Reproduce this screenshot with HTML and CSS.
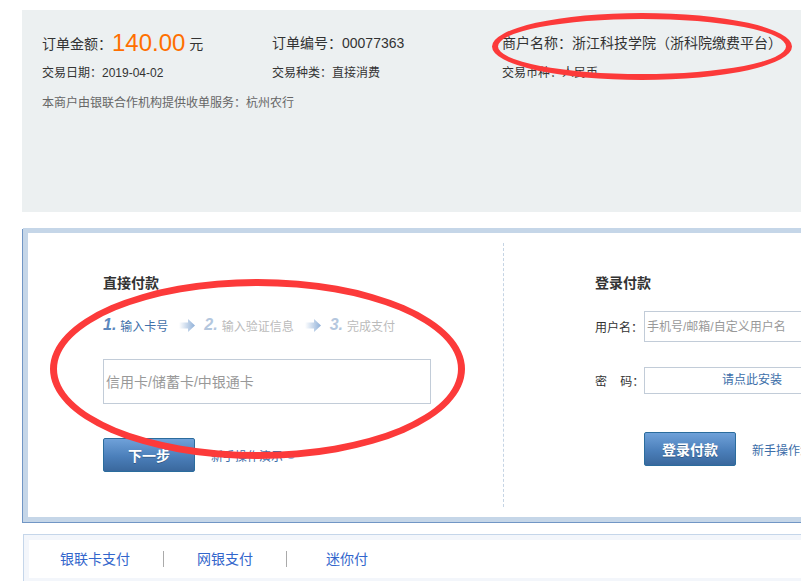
FILE: index.html
```html
<!DOCTYPE html>
<html>
<head>
  <meta charset="UTF-8">
  <title>银联在线支付</title>
  <link rel="stylesheet" href="styles.css">
</head>
<body>
  <div class="page">
    <!-- Order summary -->
    <div class="order">
      <div class="order-row big">
        <div>订单金额：<span class="amount">140.00</span> 元</div>
        <div>订单编号：00077363</div>
        <div>商户名称：浙江科技学院（浙科院缴费平台）</div>
      </div>
      <div class="order-row">
        <div>交易日期：2019-04-02</div>
        <div>交易种类：直接消费</div>
        <div>交易币种：人民币</div>
      </div>
      <div class="order-note">本商户由银联合作机构提供收单服务：杭州农行</div>
    </div>

    <!-- Payment panel -->
    <div class="pay">
      <div class="direct">
        <h3>直接付款</h3>
        <div class="steps">
          <span class="num on">1.</span><span class="step on">输入卡号</span>
          <svg class="arrow" width="16" height="13" viewBox="0 0 16 13">
            <defs>
              <linearGradient id="ag" x1="0" x2="1" y1="0" y2="0">
                <stop offset="0" stop-color="#ffffff"/>
                <stop offset="1" stop-color="#8fb0d8"/>
              </linearGradient>
            </defs>
            <path d="M0 3.5H9V0L16 6.5L9 13V9.5H0Z" fill="url(#ag)"/>
          </svg>
          <span class="num">2.</span><span class="step">输入验证信息</span>
          <svg class="arrow" width="16" height="13" viewBox="0 0 16 13">
            <path d="M0 3.5H9V0L16 6.5L9 13V9.5H0Z" fill="url(#ag)"/>
          </svg>
          <span class="num">3.</span><span class="step">完成支付</span>
        </div>
        <input class="card-input" type="text" placeholder="信用卡/储蓄卡/中银通卡">
        <div class="actions">
          <button class="btn">下一步</button>
          <a class="help" href="#">新手操作演示</a><span class="help-dot"></span>
        </div>
      </div>

      <div class="login">
        <h3>登录付款</h3>
        <div class="field user">
          <label>用户名：</label>
          <input type="text" placeholder="手机号/邮箱/自定义用户名">
        </div>
        <div class="field pass">
          <label>密&nbsp;&nbsp;&nbsp;&nbsp;码：</label>
          <div class="fake-input"><a href="#">请点此安装</a></div>
        </div>
        <div class="actions login-actions">
          <button class="btn">登录付款</button>
          <a class="help" href="#">新手操作演示</a>
        </div>
      </div>
    </div>

    <!-- Other payment methods -->
    <div class="tabs">
      <div class="tabs-inner">
        <a href="#" class="tab first">银联卡支付</a>
        <span class="sep"></span>
        <a href="#" class="tab">网银支付</a>
        <span class="sep"></span>
        <a href="#" class="tab last">迷你付</a>
      </div>
    </div>

    <!-- red hand-drawn marks -->
    <div class="mark mark-merchant"></div>
    <div class="mark mark-card"></div>
  </div>
</body>
</html>
```

FILE: styles.css
```css
/* Base */
* {
  box-sizing: border-box;
}

html, body {
  margin: 0;
  padding: 0;
  overflow: hidden;
  background: #fff;
}

body {
  font-family: "Liberation Sans", "Noto Sans CJK SC", sans-serif;
  font-size: 12px;
  color: #333;
}

a {
  text-decoration: none;
}

.page {
  position: relative;
  width: 1000px;
  padding: 10px 0 0 22px;
}

/* Order summary */
.order {
  height: 202px;
  background: #ecf0f1;
  padding: 18px 0 0 20px;
}

.order-row {
  display: grid;
  grid-template-columns: 230px 230px auto;
  height: 30px;
  align-items: center;
  line-height: 20px;
}

.order-row.big {
  font-size: 14px;
}

.amount {
  font-size: 24px;
  color: #ff6f00;
  vertical-align: -2px;
}

.order-note {
  height: 30px;
  line-height: 30px;
  color: #666;
}

/* Payment panel */
.pay {
  display: flex;
  margin: 16px 0 0 1px;
  border: 5px solid #c5d6e8;
  box-shadow: -1px 1px 0 #7196c5;
  background: #fff;
  height: 294px;
  padding: 10px 0;
}

.pay h3 {
  margin: 0;
  font-size: 14px;
  line-height: 20px;
  font-weight: bold;
  color: #333;
}

.direct {
  width: 476px;
  padding: 30px 0 0 75px;
  border-right: 1px dashed #c5d4e4;
}

.steps {
  display: flex;
  align-items: center;
  height: 20px;
  margin-top: 22px;
  color: #bbb;
}

.steps .num {
  font-size: 16px;
  font-weight: bold;
  font-style: italic;
  color: #b4c7de;
  margin-right: 4px;
}

.steps .num.on {
  color: #5c87bd;
}

.steps .step.on {
  color: #3f6fa9;
}

.steps .arrow {
  margin: 0 9px 0 11px;
}

.card-input {
  display: block;
  width: 328px;
  height: 45px;
  margin-top: 24px;
  border: 1px solid #c2ccd8;
  padding: 0 2px;
  font-family: inherit;
  font-size: 14px;
  color: #333;
  outline: none;
}

.card-input::placeholder {
  color: #999;
}

.actions {
  display: flex;
  align-items: center;
  margin-top: 34px;
}

.btn {
  width: 92px;
  height: 34px;
  border: 1px solid #2b6c9d;
  border-radius: 2px;
  background: linear-gradient(#6fa1d9, #4b7fba 55%, #3a689d);
  color: #fff;
  font-family: inherit;
  font-size: 14px;
  font-weight: bold;
  text-shadow: 0 1px 0 rgba(0,0,0,0.25);
  padding: 0;
  cursor: pointer;
}

.help {
  margin-left: 16px;
  color: #3c6ea9;
  font-size: 12px;
}

.help-dot {
  width: 8px;
  height: 8px;
  margin-left: 4px;
  border-radius: 50%;
  background: #8fb2d8;
}

/* Login side */
.login {
  padding: 30px 0 0 91px;
}

.field {
  display: flex;
  align-items: center;
}

.field label {
  width: 49px;
  color: #333;
}

.field.user {
  margin-top: 18px;
}

.field.user input {
  width: 200px;
  height: 31px;
  border: 1px solid #c2ccd8;
  padding: 0 2px;
  font-family: inherit;
  font-size: 12px;
  outline: none;
}

.field.user input::placeholder {
  color: #999;
}

.field.pass {
  margin-top: 25px;
}

.fake-input {
  width: 200px;
  height: 27px;
  line-height: 25px;
  border: 1px solid #c2ccd8;
  padding-left: 77px;
}

.fake-input a {
  color: #3c6ea9;
}

.login-actions {
  margin: 38px 0 0 49px;
}

/* Other payment methods */
.tabs {
  margin: 12px 0 0 1px;
  border: 1px solid #c5d6ea;
  padding: 5px;
  background: #f3f6fb;
}

.tabs-inner {
  display: flex;
  align-items: center;
  height: 38px;
  background: #fff;
}

.tab {
  color: #3366cc;
  font-size: 14px;
  line-height: 20px;
  padding: 0 33px;
}

.tab.first {
  padding-left: 31px;
}

.tab.last {
  padding-left: 39px;
}

.sep {
  width: 1px;
  height: 16px;
  background: #aaa;
}

/* Red annotation ellipses */
.mark {
  position: absolute;
  border-style: solid;
  border-color: #fc3a3a;
  border-radius: 50%;
}

.mark-merchant {
  left: 492px;
  top: 13px;
  width: 300px;
  height: 67px;
  border-width: 6px;
}

.mark-card {
  left: 50px;
  top: 279px;
  width: 415px;
  height: 180px;
  border-width: 7px;
}
```
